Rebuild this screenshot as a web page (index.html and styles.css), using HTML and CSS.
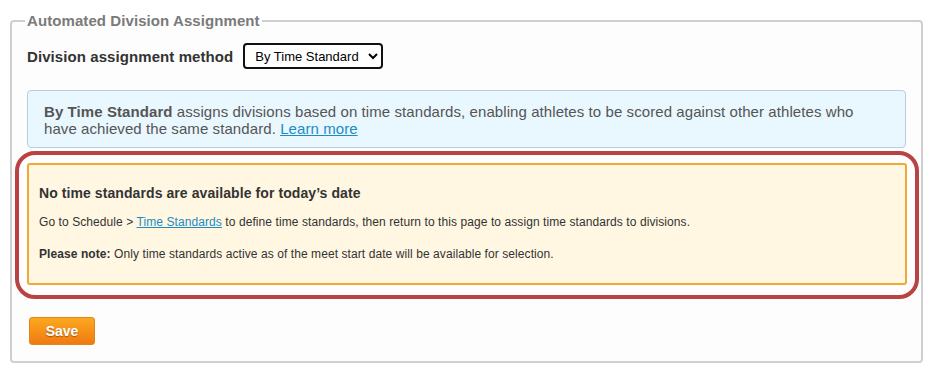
FILE: index.html
```html
<!DOCTYPE html>
<html lang="en">
<head>
    <meta charset="UTF-8">
    <meta name="viewport" content="width=device-width, initial-scale=1.0">
    <title>Automated Division Assignment</title>
    <link rel="stylesheet" href="styles.css">
</head>
<body>
    <fieldset class="division-panel">
        <legend>Automated Division Assignment</legend>

        <div class="method-row">
            <label for="assignMethod">Division assignment method</label>
            <select id="assignMethod">
                <option>By Time Standard</option>
                <option>By Age Group</option>
                <option>Manual</option>
            </select>
        </div>

        <div class="info-box">
            <p><strong>By Time Standard</strong> assigns divisions based on time standards, enabling athletes to be scored against other athletes who have achieved the same standard. <a href="#">Learn more</a></p>
        </div>

        <div class="highlight">
            <div class="warning-box">
                <h4>No time standards are available for today’s date</h4>
                <p>Go to Schedule &gt; <a href="#">Time Standards</a> to define time standards, then return to this page to assign time standards to divisions.</p>
                <p><strong>Please note:</strong> Only time standards active as of the meet start date will be available for selection.</p>
            </div>
        </div>

        <button class="save-btn">Save</button>
    </fieldset>
</body>
</html>
```

FILE: styles.css
```css
body {
    margin: 0;
    background-color: #fff;
    font-family: "Liberation Sans", Arial, sans-serif;
    letter-spacing: 0.08px;
    color: #333;
}

.division-panel {
    margin: 12px 11px 0 10px;
    padding: 14px 15px 16px 15px;
    border: 2px solid #cfcfcf;
    border-radius: 4px;
    background-color: #fdfdfd;
}

.division-panel legend {
    margin-left: -2px;
    padding: 0 2px;
    font-size: 15px;
    line-height: 17px;
    font-weight: bold;
    color: #7a7a7a;
}

.method-row {
    display: flex;
    align-items: center;
    gap: 10px;
}

.method-row label {
    font-size: 15px;
    font-weight: bold;
    color: #333;
}

.method-row select {
    width: 140px;
    height: 26px;
    font-family: "Liberation Sans", Arial, sans-serif;
    font-size: 13px;
    color: #000;
    background-color: #fff;
    border: 2px solid #111;
    border-radius: 4px;
    padding: 0 2px 0 6px;
}

.info-box {
    margin-top: 21px;
    padding: 12px 16px 10px 16px;
    background-color: #e9f7fe;
    border: 1px solid #b6cfe0;
    border-radius: 4px;
    font-size: 15px;
    line-height: 17px;
    color: #555;
}

.info-box p {
    margin: 0;
    max-width: 820px;
}

.info-box strong {
    color: #555;
}

a {
    color: #1a8cc6;
}

/* outline that marks the warning */
.highlight {
    margin: 3px -13px 0 -12px;
    padding: 8px 8px 10px 8px;
    border: 4px solid #b94242;
    border-radius: 20px;
}

.warning-box {
    padding: 20px 10px 21px 10px;
    background-color: #fff7e2;
    border: 2px solid #eea833;
    border-radius: 3px;
}

.warning-box h4 {
    margin: 0 0 13px 0;
    font-size: 14px;
    line-height: 17px;
    color: #333;
}

.warning-box p {
    margin: 0 0 17px 0;
    font-size: 12px;
    line-height: 15px;
    color: #333;
}

.warning-box p:last-child {
    margin-bottom: 0;
}

.save-btn {
    display: block;
    margin: 18px 0 0 2px;
    width: 66px;
    height: 28px;
    padding: 0;
    font-family: "Liberation Sans", Arial, sans-serif;
    font-size: 14px;
    font-weight: bold;
    color: #fff;
    text-shadow: 0 1px 1px rgba(120, 50, 0, 0.6);
    background: linear-gradient(#fba81f, #f07a12);
    border: 1px solid #e3861a;
    border-radius: 3px;
    cursor: pointer;
}
```
